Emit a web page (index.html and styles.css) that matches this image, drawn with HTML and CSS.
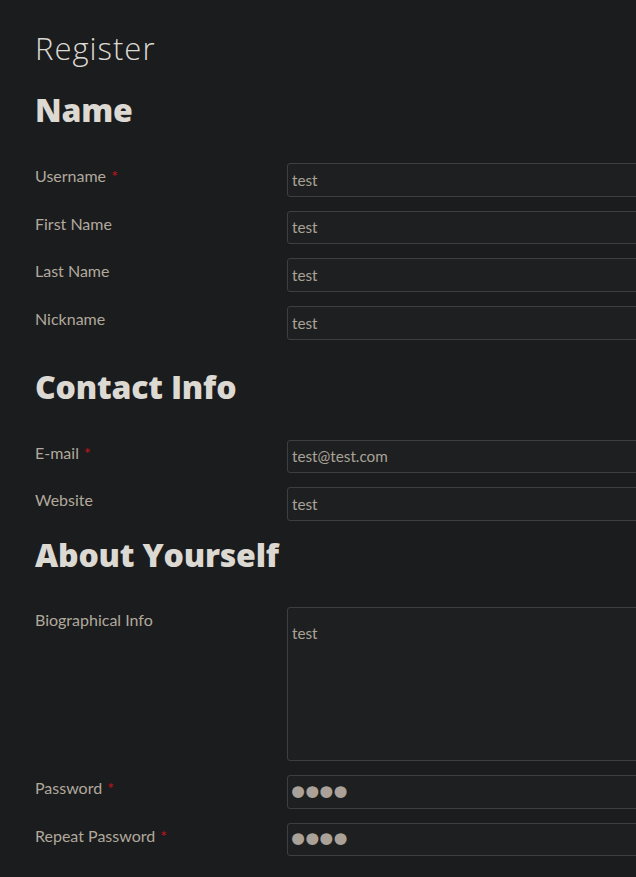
FILE: index.html
```html
<!DOCTYPE html>
<html lang="en">
<head>
<meta charset="utf-8">
<title>Register</title>
<link rel="stylesheet" href="styles.css">
</head>
<body>
<main class="page">
  <h1 class="page-title">Register</h1>
  <form class="form">
    <section class="section section-name">
      <h2 class="section-title">Name</h2>
      <div class="rows">
        <div class="row">
          <label class="label" for="username">Username <span class="req">*</span></label>
          <input class="field" id="username" type="text" value="test">
        </div>
        <div class="row">
          <label class="label" for="first">First Name</label>
          <input class="field" id="first" type="text" value="test">
        </div>
        <div class="row">
          <label class="label" for="last">Last Name</label>
          <input class="field" id="last" type="text" value="test">
        </div>
        <div class="row">
          <label class="label" for="nick">Nickname</label>
          <input class="field" id="nick" type="text" value="test">
        </div>
      </div>
    </section>
    <section class="section section-contact">
      <h2 class="section-title">Contact Info</h2>
      <div class="rows">
        <div class="row">
          <label class="label" for="email">E-mail <span class="req">*</span></label>
          <input class="field" id="email" type="text" value="test@test.com">
        </div>
        <div class="row">
          <label class="label" for="web">Website</label>
          <input class="field" id="web" type="text" value="test">
        </div>
      </div>
    </section>
    <section class="section section-about">
      <h2 class="section-title">About Yourself</h2>
      <div class="rows">
        <div class="row">
          <label class="label" for="bio">Biographical Info</label>
          <textarea class="field area" id="bio">test</textarea>
        </div>
        <div class="row">
          <label class="label" for="pw">Password <span class="req">*</span></label>
          <input class="field pw" id="pw" type="password" value="test">
        </div>
        <div class="row">
          <label class="label" for="pw2">Repeat Password <span class="req">*</span></label>
          <input class="field pw" id="pw2" type="password" value="test">
        </div>
      </div>
    </section>
  </form>
</main>
</body>
</html>
```

FILE: styles.css
```css
html, body {
  margin: 0;
  padding: 0;
  background: #1b1c1e;
  overflow: hidden;
}

.page {
  padding: 30px 0 0 35px;
  width: 560px;
}

.page-title {
  margin: 0 0 24px;
  font-family: "Open Sans", sans-serif;
  font-weight: 300;
  font-size: 31px;
  line-height: 36px;
  letter-spacing: 1px;
  color: #dcd8d2;
}

.form {
  display: flex;
  flex-direction: column;
}

.section-title {
  margin: 0 0 33px;
  font-family: "Open Sans", sans-serif;
  font-weight: 800;
  font-size: 32px;
  line-height: 40px;
  letter-spacing: -0.2px;
  color: #dcd8d2;
}

.section-name { margin-bottom: 27px; }
.section-contact { margin-bottom: 14px; }
.section-about .section-title { margin-bottom: 32px; }

.rows {
  display: flex;
  flex-direction: column;
  gap: 14px;
}

.row {
  display: grid;
  grid-template-columns: 252px 400px;
  align-items: start;
}

.label {
  padding-top: 2px;
  font-family: Lato, sans-serif;
  font-size: 16px;
  line-height: 22px;
  color: #b1a99c;
}

.req {
  color: #c8141c;
  margin-left: 1px;
}

.field {
  box-sizing: border-box;
  width: 100%;
  height: 33.67px;
  margin: 0;
  padding: 0 4px;
  background: #1e1f21;
  border: 1px solid #3e3f41;
  border-radius: 3px;
  font-family: Lato, sans-serif;
  font-size: 15.25px;
  color: #aaa397;
  outline: none;
}

.area {
  height: 154px;
  padding: 14px 4px;
  resize: none;
  line-height: 22px;
}

.pw {
  font-family: "DejaVu Sans", sans-serif;
  font-size: 41px;
  letter-spacing: -10px;
  padding-left: 0;
  text-indent: -2px;
  padding-top: 2px;
  color: #aaa298;
}
```
